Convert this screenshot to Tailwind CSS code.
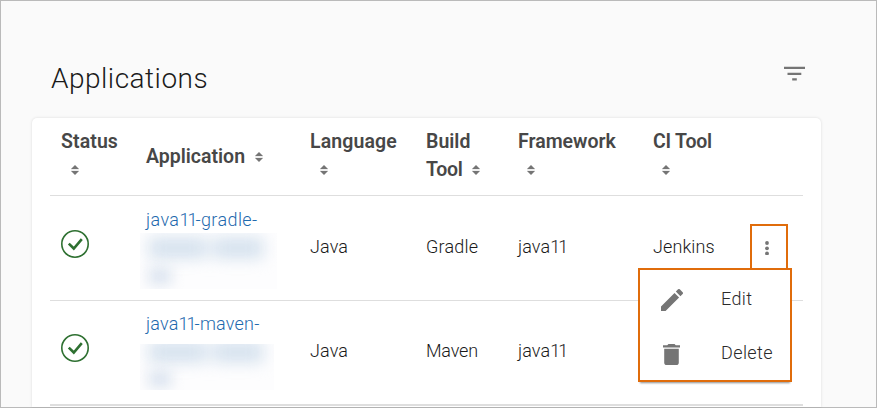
<!DOCTYPE html>
<html lang="en">
<head>
<meta charset="utf-8">
<title>Applications</title>
<script src="https://cdn.jsdelivr.net/npm/@tailwindcss/browser@4"></script>
</head>
<body class="h-[408px] w-[877px] overflow-hidden font-['Roboto',sans-serif]">
<svg class="hidden">
  <symbol id="sort" viewBox="0 0 8 10"><path d="M4 0 8 4H0ZM0 6H8L4 10Z" fill="#757575"/><path d="M0 4.5H8V5.5H0Z" fill="#ddd"/></symbol>
  <symbol id="ok" viewBox="0 0 28 28"><circle cx="14" cy="14" r="13.2" fill="none" stroke="#2e7031" stroke-width="1.6"/><path d="M7.8 13.6 12.8 18.5 20.8 9.2" fill="none" stroke="#2e7031" stroke-width="2.6"/></symbol>
</svg>
<div class="flex h-[408px] flex-col border border-[#bababa] bg-[#fafafa] pl-[31px] pr-[55px]">
  <header class="flex h-[117px] shrink-0 items-start justify-between pl-[19px] pr-[16px] pt-[60px]">
    <h1 class="text-[28px] leading-[36px] font-[350] tracking-[0.5px] text-[#1a1a1a]">Applications</h1>
    <svg class="mt-[5px] h-[16px] w-[21px]" viewBox="0 0 21 16"><path d="M0 .8H21V3H0ZM3.5 6.7H17.3V9H3.5ZM8.2 12.3H12.8V14.6H8.2Z" fill="#757575"/></svg>
  </header>
  <main class="relative h-[289px] overflow-visible rounded-t-[5px] bg-white px-[18px] shadow-[0_0_3px_rgba(0,0,0,0.13)]">
    <div class="grid h-[78px] grid-cols-[85px_164px_116px_92px_135px_1fr] border-b border-[#dedede] pl-[11px] pt-[9px] text-[19.5px] leading-[28px] font-semibold text-[#474747]">
      <div><div class="pt-px tracking-[0.1px]">Status</div><svg class="ml-[10px] mt-[9px] h-[10px] w-[8px]"><use href="#sort"/></svg></div>
      <div class="flex items-center pb-[9px]"><span>Application</span><svg class="ml-[10px] h-[10px] w-[8px]"><use href="#sort"/></svg></div>
      <div><div class="pt-px tracking-[0.1px]">Language</div><svg class="ml-[10px] mt-[9px] h-[10px] w-[8px]"><use href="#sort"/></svg></div>
      <div class="pt-px"><div>Build</div><div class="flex items-center"><span class="tracking-[-0.3px]">Tool</span><svg class="ml-[10px] h-[10px] w-[8px]"><use href="#sort"/></svg></div></div>
      <div><div class="pt-px">Framework</div><svg class="ml-[9px] mt-[9px] h-[10px] w-[8px]"><use href="#sort"/></svg></div>
      <div><div class="pt-px tracking-[-0.2px]">CI Tool</div><svg class="ml-[9px] mt-[9px] h-[10px] w-[8px]"><use href="#sort"/></svg></div>
    </div>
    <div class="grid h-[105px] grid-cols-[85px_164px_116px_92px_135px_105px_1fr] border-b border-[#dedede] pl-[11px] text-[18px] leading-[28px] font-[350] tracking-[0.1px] text-[#1a1a1a]">
      <div class="pt-[34px]"><svg class="h-[28px] w-[28px]"><use href="#ok"/></svg></div>
      <div class="pt-[10px] text-[#1f6aae]"><div class="tracking-[0.4px]">java<span class="tracking-[-2px]">11</span>-gradle-</div>
        <div class="-ml-[6px] -mt-px h-[56px] w-[137px] overflow-hidden bg-[#fdfdfe] pl-[9px] pt-[5px]"><div class="flex gap-[6px] blur-[8px]"><i class="h-[20px] w-[58px] bg-[#d3e0ed]"></i><i class="h-[20px] w-[50px] bg-[#d3e0ed]"></i></div><div class="mt-[10px] h-[16px] w-[22px] bg-[#d8e1ee] blur-[7px]"></div></div></div>
      <div class="pt-[37px]">Java</div><div class="pt-[37px] tracking-[0.2px]">Gradle</div><div class="pt-[37px]">java<span class="tracking-[-2px]">11</span></div><div class="pt-[37px]">Jenkins</div>
      <div class="pt-[45px] pl-[7px]"><svg class="h-[14px] w-[4px]" viewBox="0 0 4 14" fill="#757575"><circle cx="2" cy="2" r="1.9"/><circle cx="2" cy="7.3" r="1.9"/><circle cx="2" cy="12.5" r="1.9"/></svg></div>
    </div>
    <div class="grid h-[105px] grid-cols-[85px_164px_116px_92px_135px_1fr] border-b-2 border-[#dedede] pl-[11px] text-[18px] leading-[28px] font-[350] tracking-[0.1px] text-[#1a1a1a]">
      <div class="pt-[33px]"><svg class="h-[28px] w-[28px]"><use href="#ok"/></svg></div>
      <div class="pt-[9px] text-[#1f6aae]"><div class="tracking-[0.2px]">java<span class="tracking-[-2px]">11</span>-maven-</div>
        <div class="-ml-[6px] mt-[6px] h-[46px] w-[134px] overflow-hidden bg-[#fdfdfe] pl-[9px]"><div class="-mt-[2px] flex gap-[6px] blur-[8px]"><i class="h-[20px] w-[58px] bg-[#d3e0ed]"></i><i class="h-[20px] w-[50px] bg-[#d3e0ed]"></i></div><div class="mt-[9px] h-[16px] w-[22px] bg-[#d8e1ee] blur-[7px]"></div></div></div>
      <div class="pt-[36px]">Java</div><div class="pt-[36px] tracking-[-0.2px]">Maven</div><div class="pt-[36px]">java<span class="tracking-[-2px]">11</span></div>
    </div>
    <div class="absolute left-[718px] top-[106px] h-[46px] w-[38px] border-2 border-[#e06c0b]"></div>
    <div class="absolute left-[606px] top-[150px] h-[114px] w-[154px] border-2 border-[#e06c0b] bg-white pt-[2px] text-[18px] leading-[54px] font-[350] tracking-[0.4px] text-[#2a2a2a] shadow-[0_3px_2px_-2px_rgba(0,0,0,0.45)]">
      <div class="flex h-[54px] items-center"><svg class="ml-[21px] mr-[38px] mt-[2px] h-[22px] w-[22px]" viewBox="3 3 18 18" fill="#757575"><path d="M3 17.25V21h3.75L17.81 9.94l-3.75-3.75L3 17.25zM20.71 7.04a1 1 0 0 0 0-1.41l-2.34-2.34a1 1 0 0 0-1.41 0l-1.83 1.83 3.75 3.75 1.83-1.83z"/></svg>Edit</div>
      <div class="flex h-[54px] items-center"><svg class="ml-[23px] mr-[41px] mt-[2px] h-[21px] w-[17px]" viewBox="5 3 14 18" preserveAspectRatio="none" fill="#757575"><path d="M6 19c0 1.100.9 2 2 2h8c1.100 0 2-.9 2-2V7H6v12zM19 4h-3.500l-1-1h-5l-1 1H5v2h14V4z"/></svg>Delete</div>
    </div>
  </main>
</div>
</body>
</html>
